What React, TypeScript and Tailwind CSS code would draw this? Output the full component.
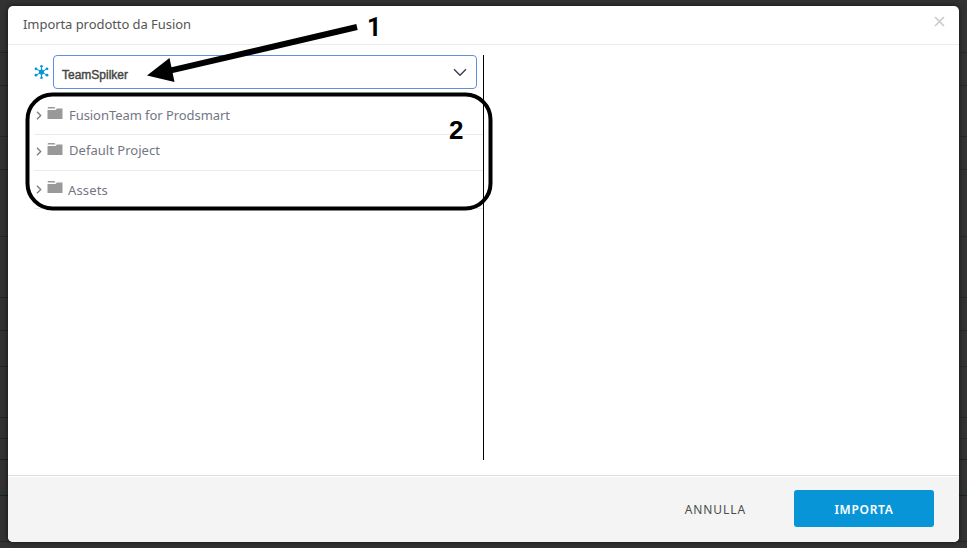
import React from "react";

const backdropLines = [
  { gap: "mt-[52px]", color: "bg-[#262626]" },
  { gap: "mt-[32px]", color: "bg-[#262626]" },
  { gap: "mt-[50px]", color: "bg-[#262626]" },
  { gap: "mt-[32px]", color: "bg-[#262626]" },
  { gap: "mt-[66px]", color: "bg-[#262626]" },
  { gap: "mt-[60px]", color: "bg-[#262626]" },
  { gap: "mt-[32px]", color: "bg-[#262626]" },
  { gap: "mt-[35px]", color: "bg-[#262626]" },
  { gap: "mt-[50px]", color: "bg-[#262626]" },
  { gap: "mt-[20px]", color: "bg-[#262626]" },
  { gap: "mt-[20px]", color: "bg-[#0d2530]" },
  { gap: "mt-[35px]", color: "bg-[#0d2530]" },
  { gap: "mt-[45px]", color: "bg-[#262626]" },
];

const projects = [
  { name: "FusionTeam for Prodsmart", row: "h-[36px] pt-[8px]", chevron: "mt-[4px]", label: "ml-[6px] pt-[1px] tracking-[-0.06px]" },
  { name: "Default Project", row: "h-[36px] pt-[8px]", chevron: "mt-[4px]", label: "ml-[6px] tracking-[0.03px]" },
  { name: "Assets", row: "h-[38px] pt-[10px]", chevron: "mt-[4px]", label: "ml-[5px] pt-[2px] tracking-[0.15px]" },
];

function HubIcon() {
  return (
    <svg width="16" height="16" viewBox="0 0 16 16" className="mt-[9px] shrink-0" fill="#0696d7" stroke="#0696d7">
      <path d="M7.5 2v12M2 4.8 13 11.2M13 4.8 2 11.2" strokeWidth="1" />
      <g stroke="none">
        <circle cx="7.5" cy="8" r="2.6" />
        <circle cx="7.5" cy="2.2" r="1.3" />
        <circle cx="7.5" cy="13.8" r="1.3" />
        <circle cx="2" cy="4.8" r="1.4" />
        <circle cx="13" cy="4.8" r="1.4" />
        <circle cx="2" cy="11.2" r="1.4" />
        <circle cx="13" cy="11.2" r="1.4" />
      </g>
    </svg>
  );
}

function FolderIcon() {
  return (
    <svg width="16" height="13" viewBox="0 0 16 13" className="shrink-0" fill="#999">
      <path d="M1 0h6.5l1 1.6H.5z" />
      <path d="M.5 3h8L10 1.5h5.5V12H.5z" />
    </svg>
  );
}

export default function App() {
  return (
    <div className="relative h-[548px] w-[967px] overflow-hidden bg-[#323232] px-2 pt-[6px] font-['Noto_Sans',sans-serif]">
      <div className="absolute inset-0 flex flex-col">
        {backdropLines.map((line, i) => (
          <div key={i} className={`h-px shrink-0 ${line.gap} ${line.color}`} />
        ))}
      </div>

      <div className="relative flex h-[536px] w-[951px] flex-col overflow-hidden rounded-[5px] bg-white shadow-[0_0_5px_rgba(0,0,0,0.65)]">
        <header className="flex h-[39px] shrink-0 items-start justify-between border-b border-[#ececec] pl-[15px] pr-[14px]">
          <h1 className="pt-[8px] text-[13px] leading-[20px] tracking-[-0.06px] text-[#555]">Importa prodotto da Fusion</h1>
          <button aria-label="Chiudi" className="mt-[10px]">
            <svg width="11" height="11" viewBox="0 0 11 11" stroke="#c8c8c8" strokeWidth="1.5">
              <path d="m1 1 9 9M10 1 1 10" />
            </svg>
          </button>
        </header>

        <main className="flex flex-1 items-start pl-[26px] pt-[10px]">
          <section className="flex h-[405px] w-[450px] flex-col border-r border-black">
            <div className="flex">
              <HubIcon />
              <button className="ml-[3px] flex h-[34px] w-[424px] items-center justify-between rounded-[4px] border border-[#5f8ee5] pl-[8px] pr-[9px]">
                <span className="pt-[6px] font-['Liberation_Sans',sans-serif] text-[12px] leading-[16px] text-[#444] [-webkit-text-stroke:0.4px_#444]">TeamSpilker</span>
                <svg width="14" height="9" viewBox="0 0 14 9" fill="none" stroke="#3c4353" strokeWidth="1.5">
                  <path d="m1 1.3 6 6 6-6" />
                </svg>
              </button>
            </div>
            <ul className="mt-[10px]">
              {projects.map((project) => (
                <li key={project.name} className={`flex items-start border-b border-[#eaeaea] pl-[2px] ${project.row}`}>
                  <svg width="6" height="9" viewBox="0 0 6 9" className={`shrink-0 ${project.chevron}`} fill="none" stroke="#808080" strokeWidth="1.4">
                    <path d="m1 .8 3.7 3.7L1 8.2" />
                  </svg>
                  <span className="ml-[5px]"><FolderIcon /></span>
                  <span className={`-mt-[1px] text-[13px] leading-[16px] text-[#737683] ${project.label}`}>{project.name}</span>
                </li>
              ))}
            </ul>
          </section>
        </main>

        <footer className="h-[67px] shrink-0 border-t border-[#dcdcdc] pt-px">
          <div className="flex h-full items-start justify-end bg-[#f4f4f4] pr-[25px] pt-[13px]">
            <button className="mr-[48px] h-[37px] pt-[2px] text-[12px] tracking-[0.9px] text-[#4c4c4c]">ANNULLA</button>
            <button className="h-[37px] w-[140px] rounded-[3px] bg-[#0895d8] pt-[2px] text-[12px] font-semibold tracking-[0.7px] text-white">IMPORTA</button>
          </div>
        </footer>
      </div>

      <svg width="967" height="548" viewBox="0 0 967 548" className="pointer-events-none absolute left-0 top-0">
        <rect x="27.5" y="94.5" width="463" height="114" rx="25" fill="none" stroke="#000" strokeWidth="4" />
        <path d="M357 27 170 70.7" stroke="#000" strokeWidth="6" />
        <path d="m147 75.5 22.5-17.5 5 24z" />
      </svg>
      <span className="absolute left-[367px] top-[14px] font-['Roboto',sans-serif] text-[25px] font-bold leading-[28px] text-black">1</span>
      <span className="absolute left-[449px] top-[116px] font-['Liberation_Sans',sans-serif] text-[26px] font-bold leading-[28px] text-black">2</span>
    </div>
  );
}
